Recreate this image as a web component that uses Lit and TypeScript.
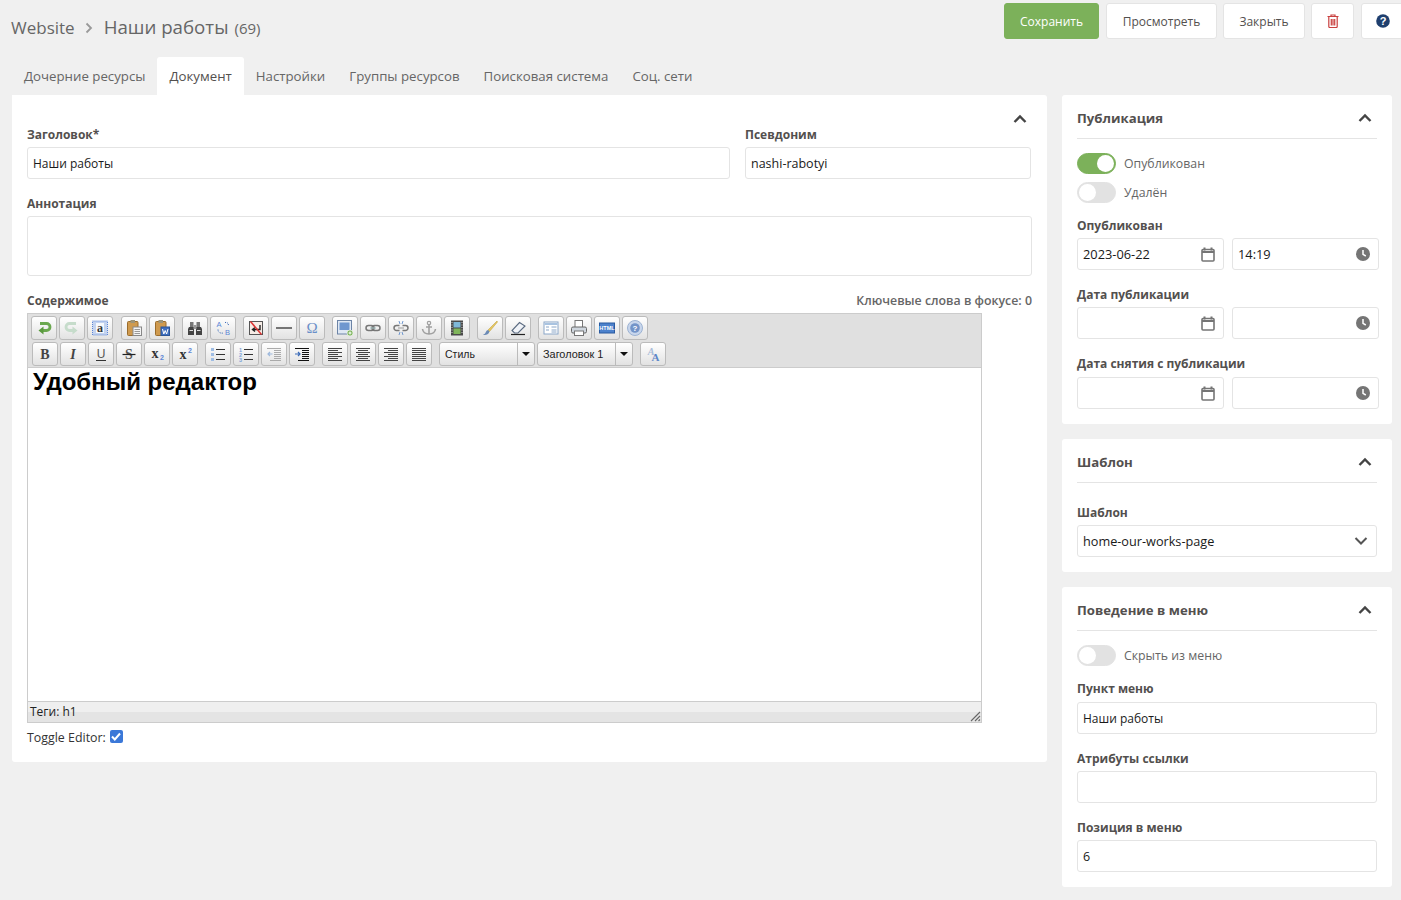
import { LitElement, html, css, svg, nothing } from "lit";
import { customElement } from "lit/decorators.js";

const chevronUp = html`<svg class="chev" width="14" height="10" viewBox="0 0 14 10"><path d="M1.5 8 7 2.5 12.5 8" fill="none" stroke="#444" stroke-width="2.4"/></svg>`;
const chevronDown = html`<svg width="14" height="10" viewBox="0 0 14 10"><path d="M1.5 2 7 7.5 12.5 2" fill="none" stroke="#555" stroke-width="2"/></svg>`;
const calendar = html`<svg width="14" height="15" viewBox="0 0 14 15"><path d="M3.5.5v3M10.500.5v3" stroke="#757575" stroke-width="2"/><rect x="1" y="2.500" width="12" height="11.500" rx="1" fill="none" stroke="#757575" stroke-width="1.600"/><path d="M1 5h12" stroke="#757575" stroke-width="2"/></svg>`;
const clock = html`<svg width="14" height="14" viewBox="0 0 14 14"><circle cx="7" cy="7" r="7" fill="#757575"/><path d="M7 3v4.300l2.800 1.700" fill="none" stroke="#fff" stroke-width="1.500"/></svg>`;

// toolbar icons, 16x16 box
const icons: Record<string, unknown> = {
  undo: svg`<path d="M4 3.500h6.500a3.500 3.500 0 0 1 0 7H6.500" fill="none" stroke="#6aa84f" stroke-width="2.800"/><path d="M7.500 6.500 2.500 10.500l5 4z" fill="#5a9a3f"/>`,
  redo: svg`<path d="M12 3.500H5.500a3.500 3.500 0 0 0 0 7h4" fill="none" stroke="#c6dccb" stroke-width="2.800"/><path d="M8.500 6.500l5 4-5 4z" fill="#c6dccb"/>`,
  selectall: svg`<rect x="0.500" y="1" width="15" height="14" fill="#c3d3f0"/><path d="M.5 1h15v14H.5z" fill="none" stroke="#5c86d6" stroke-dasharray="1 1"/><rect x="4" y="3" width="8" height="10" fill="#fff" opacity=".85"/><text x="8" y="12" font-family="Liberation Serif" font-weight="700" font-size="12" text-anchor="middle" fill="#333">a</text>`,
  paste: svg`<rect x="1.500" y="1.500" width="10.500" height="14" rx="1" fill="#cf9a4e" stroke="#9a6c2c"/><rect x="4.500" y="0" width="4.500" height="3" fill="#9c9478"/><rect x="7" y="7" width="8.500" height="8.500" fill="#f4f4f4" stroke="#888"/><path d="M8.500 9.500h5.500M8.500 11.500h5.500M8.500 13.500h5.500" stroke="#999"/>`,
  word: svg`<rect x="1.500" y="1.500" width="10.500" height="14" rx="1" fill="#cf9a4e" stroke="#9a6c2c"/><rect x="4.500" y="0" width="4.500" height="3" fill="#9c9478"/><rect x="7" y="7" width="8.500" height="8.500" fill="#3f6fc0" stroke="#2c5596"/><path d="M8.500 9l1.300 5 1.400-3.500 1.400 3.500L14 9" fill="none" stroke="#fff"/>`,
  search: svg`<path d="M2 7h5v8H1V9zM9 7h5l1 2v6H9z" fill="#444"/><rect x="3" y="2" width="3.500" height="5" fill="#777"/><rect x="9.500" y="2" width="3.500" height="5" fill="#777"/><rect x="6.500" y="5" width="3" height="4" fill="#999"/><path d="M2.500 10.500h3.500M10 10.500h3.500" stroke="#ddd"/>`,
  replace: svg`<text x="4" y="7" font-family="Liberation Sans" font-size="7.500" text-anchor="middle" fill="#5c86d6">A</text><text x="12.500" y="14.500" font-family="Liberation Sans" font-size="7.500" text-anchor="middle" fill="#5c86d6">B</text><path d="M10 2.500c3-.5 3.500 1.500 3.500 3.500M3 9.500c0 3 2 4 6 3.500" fill="none" stroke="#3a6ab8" stroke-dasharray="1 1"/>`,
  pagebreak: svg`<rect x="1.500" y="1.500" width="13" height="13" fill="#f6ece6" stroke="#555"/><path d="M12 5v4.500H5M7 7.500l-2.500 2 2.500 2" fill="none" stroke="#222" stroke-width="1.400"/><path d="M2.500 1.500l11 13" stroke="#d33" stroke-width="1.500"/>`,
  hr: svg`<path d="M0 8h16" stroke="#222" stroke-width="1.200"/>`,
  omega: svg`<text x="8" y="13" font-family="Liberation Serif" font-size="15" text-anchor="middle" fill="#6a8fc8">Ω</text>`,
  image: svg`<rect x="0.500" y="0.500" width="14" height="13.500" fill="#dfe8f4" stroke="#6c84a6"/><rect x="2.500" y="2.500" width="10" height="7.500" fill="#6f97cf"/><circle cx="13" cy="13" r="3" fill="#7bb35a" stroke="#fff" stroke-width=".6"/><path d="M11.500 13h3M13 11.500v3" stroke="#fff"/>`,
  link: svg`<rect x="1" y="5.500" width="8" height="5" rx="2.500" fill="none" stroke="#777" stroke-width="1.500"/><rect x="7" y="5.500" width="8" height="5" rx="2.500" fill="none" stroke="#777" stroke-width="1.500"/><path d="M5 8h6" stroke="#9bb" />`,
  unlink: svg`<path d="M6.500 5.500H3.500a2.500 2.500 0 0 0 0 5h3M9.500 5.500h3a2.500 2.500 0 0 1 0 5h-3" fill="none" stroke="#777" stroke-width="1.500"/><path d="M5 8h6" stroke="#999"/><path d="M6 1l1 3M10 1 9 4M6 15l1-3M10 15l-1-3" stroke="#6f97cf"/>`,
  anchor: svg`<circle cx="8" cy="3" r="1.700" fill="none" stroke="#a0a0a0" stroke-width="1.200"/><path d="M8 4.500V14M5 7h6M1.500 9c.5 3.500 3.500 5 6.500 5s6-1.500 6.500-5" fill="none" stroke="#a0a0a0" stroke-width="1.600"/>`,
  media: svg`<rect x="2" y="0.500" width="12" height="15" fill="#4a4a4a"/><rect x="4.500" y="2" width="7" height="5.500" fill="#7fb8d8"/><rect x="4.500" y="8.500" width="7" height="5.500" fill="#7fb55a"/><path d="M3 2v12" stroke="#ccc" stroke-dasharray="1 1.500"/><path d="M13 2v12" stroke="#ccc" stroke-dasharray="1 1.500"/>`,
  brush: svg`<path d="M15 1 6 10l1.500 1.500L15.500 2z" fill="#e8c860" stroke="#b89a3a" stroke-width=".5"/><path d="M6 10c-2 .5-2 2-3 3.500-.5.800-1.500 1-2 1.200 2 .8 5.500.3 6.500-3.200z" fill="#6b8ab5"/>`,
  eraser: svg`<path d="M9.500 2.500 15 6 8 13H4.500L2 10.500z" fill="#f0f3f8" stroke="#5a6a80" stroke-width="1.100"/><path d="M1 14.500h14" stroke="#222" stroke-width="1.200"/>`,
  template: svg`<rect x="1" y="2" width="14" height="12" fill="#fff" stroke="#8aa6c8"/><path d="M1.500 4h13" stroke="#a9c3e0" stroke-width="2"/><path d="M3 7h3M3 10h3M8.500 7h5M8.500 10h5M8.500 12h5" stroke="#8aa6c8"/>`,
  print: svg`<rect x="4" y="0.500" width="7.500" height="7" fill="#fff" stroke="#777"/><rect x="0.500" y="7" width="15" height="6" rx="1.500" fill="#cfd6de" stroke="#666"/><rect x="3.500" y="11" width="9" height="4.500" fill="#fff" stroke="#777"/>`,
  html: svg`<rect x="0.500" y="3" width="15" height="10" fill="#4d82cc" stroke="#2a5aa0"/><text x="8" y="10.300" font-family="Liberation Sans" font-weight="700" font-size="5.500" text-anchor="middle" fill="#fff">HTML</text>`,
  help: svg`<circle cx="8" cy="8" r="7.500" fill="#c8d6ec" stroke="#9cb2d2"/><circle cx="8" cy="8" r="4.800" fill="#7394c8"/><text x="8" y="11" font-family="Liberation Sans" font-weight="700" font-size="8" text-anchor="middle" fill="#fff">?</text>`,
  bold: svg`<text x="8" y="13" font-family="Liberation Serif" font-weight="700" font-size="14" text-anchor="middle" fill="#444">B</text>`,
  italic: svg`<text x="8" y="13" font-family="Liberation Serif" font-style="italic" font-weight="700" font-size="14" text-anchor="middle" fill="#444">I</text>`,
  underline: svg`<text x="8" y="12" font-family="Liberation Sans" font-size="12" text-anchor="middle" fill="#555">U</text><path d="M3 14.500h10" stroke="#333"/>`,
  strike: svg`<text x="8" y="13" font-family="Liberation Serif" font-weight="700" font-size="14" text-anchor="middle" fill="#555">S</text><path d="M1.500 8.500h13" stroke="#222" stroke-width="1.200"/>`,
  sub: svg`<text x="6" y="12" font-family="Liberation Serif" font-weight="700" font-size="14" text-anchor="middle" fill="#333">x</text><text x="13" y="14" font-family="Liberation Sans" font-weight="700" font-size="7" text-anchor="middle" fill="#5c86d6">2</text>`,
  sup: svg`<text x="6" y="13" font-family="Liberation Serif" font-weight="700" font-size="14" text-anchor="middle" fill="#333">x</text><text x="13" y="7" font-family="Liberation Sans" font-weight="700" font-size="7" text-anchor="middle" fill="#5c86d6">2</text>`,
  ul: svg`<path d="M1 2h3v3H1zM1 7h3v3H1zM1 12h3v3H1z" fill="#9fbde4"/><path d="M6 3.500h9M6 8.500h9M6 13.500h9" stroke="#333" stroke-width="1.100"/>`,
  ol: svg`<text x="2.500" y="6" font-family="Liberation Sans" font-weight="700" font-size="5.500" text-anchor="middle" fill="#7fa5d8">1</text><text x="2.500" y="11" font-family="Liberation Sans" font-weight="700" font-size="5.500" text-anchor="middle" fill="#7fa5d8">2</text><text x="2.500" y="15.500" font-family="Liberation Sans" font-weight="700" font-size="5.500" text-anchor="middle" fill="#7fa5d8">3</text><path d="M6 3.500h9M6 8.500h9M6 13.500h9" stroke="#333" stroke-width="1.100"/>`,
  outdent: svg`<path d="M1 2.500h14M8 4.500h7M8 6.500h7M8 8.500h7M8 10.500h7M8 12.500h7M4 14.500h11" stroke="#aaa"/><path d="M6.500 8H2M4 6 2 8l2 2" fill="none" stroke="#9db8dc" stroke-width="1.200"/>`,
  indent: svg`<path d="M1 2.500h14M8 4.500h7M8 6.500h7M8 8.500h7M8 10.500h7M8 12.500h7M4 14.500h11" stroke="#111"/><path d="M1 8h5M4 6 6 8l-2 2" fill="none" stroke="#3a6ab8" stroke-width="1.200"/>`,
  left: svg`<path d="M1 2.500h14M1 4.500h10M1 6.500h14M1 8.500h10M1 10.500h14M1 12.500h10M1 14.500h14" stroke="#444"/>`,
  center: svg`<path d="M1 2.500h14M3 4.500h10M1 6.500h14M3 8.500h10M1 10.500h14M3 12.500h10M1 14.500h14" stroke="#444"/>`,
  right: svg`<path d="M1 2.500h14M5 4.500h10M1 6.500h14M5 8.500h10M1 10.500h14M5 12.500h10M1 14.500h14" stroke="#444"/>`,
  justify: svg`<path d="M1 2.500h14M1 4.500h14M1 6.500h14M1 8.500h14M1 10.500h14M1 12.500h14M1 14.500h14" stroke="#444"/>`,
  font: svg`<text x="6" y="9" font-family="Liberation Serif" font-weight="700" font-style="italic" font-size="10" text-anchor="middle" fill="#a8bcd8">A</text><text x="10.500" y="15" font-family="Liberation Serif" font-weight="700" font-size="11" text-anchor="middle" fill="#5c86c8">A</text>`,
};

const row1 = [
  ["undo", "redo", "selectall"],
  ["paste", "word"],
  ["search", "replace"],
  ["pagebreak", "hr", "omega"],
  ["image", "link", "unlink", "anchor", "media"],
  ["brush", "eraser"],
  ["template", "print", "html", "help"],
];
const row2 = [
  ["bold", "italic", "underline", "strike", "sub", "sup"],
  ["ul", "ol", "outdent", "indent"],
  ["left", "center", "right", "justify"],
];

@customElement("app-root")
export class AppRoot extends LitElement {
  static styles = css`
    :host {
      display: block;
      height: 900px;
      overflow: hidden;
      background: #f0f0f0;
      color: #53504e;
      font-family: "Open Sans", "Noto Sans", sans-serif;
      font-size: 13px;
    }
    .top {
      display: flex;
      align-items: flex-start;
      padding: 3px 0 0 11px;
      height: 57px;
      box-sizing: border-box;
    }
    .crumbs {
      display: flex;
      align-items: baseline;
      margin-top: 12px;
      font-size: 17px;
      line-height: 24px;
      color: #666;
    }
    .crumbs svg { margin: 0 11px 0 10px; align-self: center; }
    .crumbs .name { font-size: 18.700px; }
    .crumbs .count { font-size: 15px; margin-left: 6px; }
    .actions {
      display: flex;
      gap: 6px;
      margin-left: auto;
      margin-right: -3px;
    }
    .btn {
      height: 36px;
      box-sizing: border-box;
      display: flex;
      align-items: center;
      justify-content: center;
      background: #fff;
      border: 1px solid #e4e4e4;
      border-radius: 3px;
      font-size: 12px;
      color: #53504e;
    }
    .btn.save { width: 95px; background: #7cb15a; border-color: #7cb15a; color: #fff; margin-right: 1px; }
    .btn.view { width: 111px; }
    .btn.close { width: 82px; }
    .btn.icon { width: 43px; }
    .btn.help { margin-left: 1px; }
    .layout {
      display: grid;
      grid-template-columns: 1035px 330px;
      gap: 15px;
      padding-left: 12px;
    }
    .tabs { display: flex; height: 38px; }
    .tab {
      padding: 0 12px;
      line-height: 39px;
      font-size: 13.250px;
      color: #666;
      border-radius: 3px 3px 0 0;
    }
    .tab.active { background: #fff; color: #53504e; }
    .main {
      background: #fff;
      border-radius: 0 3px 3px 3px;
      padding: 15px;
      height: 667px;
      box-sizing: border-box;
    }
    .main-head {
      display: flex;
      justify-content: flex-end;
      height: 17px;
      padding-right: 5px;
      align-items: flex-start;
      padding-top: 4px;
      box-sizing: border-box;
    }
    label, .lbl {
      display: block;
      font-weight: 700;
      font-size: 12px;
      line-height: 16px;
      margin-bottom: 4px;
      color: #53504e;
    }
    .lbl.far { margin-bottom: 5px; }
    .row { display: grid; grid-template-columns: 703px 286px; gap: 15px; margin-bottom: 17px; }
    .input {
      height: 32px;
      box-sizing: border-box;
      border: 1px solid #e4e4e4;
      border-radius: 3px;
      background: #fff;
      padding: 0 5px;
      display: flex;
      align-items: center;
      justify-content: space-between;
      color: #1a1a1a;
      font-size: 12.500px;
    }
    .input.ru { font-size: 12px; }
    .area { height: 60px; margin-bottom: 17px; }
    .content-head { display: flex; justify-content: space-between; }
    .keywords { font-size: 12.350px; line-height: 16px; font-weight: 600; color: #666; }

    .editor {
      width: 955px;
      height: 410px;
      box-sizing: border-box;
      border: 1px solid #ccc;
      display: flex;
      flex-direction: column;
      font-family: "Liberation Sans", Arial, sans-serif;
    }
    .bars {
      background: #e0e0e0;
      height: 54px;
      flex: none;
      padding: 1px 0 0 3px;
      box-sizing: border-box;
      border-bottom: 1px solid #ccc;
    }
    .bar { display: flex; gap: 7px; height: 26px; }
    .bar.second { margin-left: 1px; }
    .group { display: flex; gap: 2px; }
    .bar.first .group:first-child { margin-right: 1px; }
    .tb {
      width: 26px;
      height: 24px;
      margin-top: 1px;
      box-sizing: border-box;
      border: 1px solid #bbb;
      border-radius: 3px;
      background: linear-gradient(#fff, #e2e2e2);
      display: flex;
      align-items: center;
      justify-content: center;
    }
    .sel {
      width: 96px;
      height: 24px;
      margin-top: 1px;
      box-sizing: border-box;
      border: 1px solid #bbb;
      border-radius: 3px;
      background: linear-gradient(#fff, #e2e2e2);
      display: flex;
      font-size: 10.500px;
      color: #222;
      align-items: center;
    }
    .sel + .sel { font-size: 10.900px; }
    .sel span { flex: 1; padding-left: 5px; white-space: nowrap; }
    .sel i {
      width: 16px;
      height: 22px;
      border-left: 1px solid #bbb;
      display: flex;
      align-items: center;
      justify-content: center;
    }
    .sel i::after {
      content: "";
      border: 4px solid transparent;
      border-top: 4px solid #111;
      border-bottom: 0;
    }
    .body {
      flex: 1;
      background: #fff;
      padding: 0 5px;
      color: #000;
    }
    .body h1 { margin: 0; font-size: 24px; line-height: 28px; font-weight: 700; }
    .status {
      height: 21px;
      flex: none;
      box-sizing: border-box;
      border-top: 1px solid #ccc;
      background: linear-gradient(#efefef 50%, #e4e4e4 50%);
      font-family: "Open Sans", sans-serif;
      font-size: 12px;
      line-height: 20px;
      padding-left: 2px;
      color: #222;
      position: relative;
    }
    .status svg { position: absolute; right: 0; bottom: 0; }
    .toggle-ed {
      display: flex;
      align-items: center;
      gap: 4px;
      margin-top: 8px;
      font-size: 12.400px;
      line-height: 14px;
      color: #333;
    }
    .check {
      width: 13px;
      height: 13px;
      background: #3b78d8;
      border-radius: 2px;
      display: flex;
      margin-top: -3px;
      align-items: center;
      justify-content: center;
    }

    .side { padding-top: 38px; display: flex; flex-direction: column; gap: 15px; }
    .card { background: #fff; border-radius: 3px; padding: 0 15px; box-sizing: border-box; }
    .card-head {
      display: flex;
      align-items: center;
      justify-content: space-between;
      height: 44px;
      border-bottom: 1px solid #e4e4e4;
      padding: 3px 5px 0 0;
      box-sizing: border-box;
      font-weight: 700;
      font-size: 13.200px;
      color: #53504e;
    }
    .card.pub { height: 329px; }
    .card.tpl { height: 133px; }
    .card.menu { height: 300px; }
    .switch-row {
      display: flex;
      align-items: center;
      gap: 8px;
      height: 21px;
      font-size: 12.300px;
      color: #666;
      margin-bottom: 8px;
    }
    .switch {
      width: 39px;
      height: 21px;
      border-radius: 11px;
      background: #e2e2e2;
      box-sizing: border-box;
      border: 1px solid #e2e2e2;
      position: relative;
      flex: none;
    }
    .switch::after {
      content: "";
      position: absolute;
      top: 1px;
      left: 1px;
      width: 17px;
      height: 17px;
      border-radius: 50%;
      background: #fff;
    }
    .switch.on { background: #7cb15a; border-color: #7cb15a; }
    .switch.on::after { left: 19px; }
    .switches { padding-top: 14px; }
    .switch-row:last-child { margin-bottom: 15px; }
    .dates { display: grid; grid-template-columns: 147px 147px; gap: 8px; width: 302px; margin-bottom: 17px; }
    .dates .input { padding-right: 8px; font-size: 12.800px; }
    .fld { margin-bottom: 17px; }
    .tpl .fld { margin-top: 22px; }
    .input.select { padding-right: 8px; font-size: 12.700px; }
  `;

  private toolbarButton(name: string) {
    return html`<div class="tb"><svg width="16" height="16" viewBox="0 0 16 16">${icons[name]}</svg></div>`;
  }

  private dateRow(date: string, time: string) {
    return html`<div class="dates">
      <div class="input">${date}<span></span>${calendar}</div>
      <div class="input">${time}<span></span>${clock}</div>
    </div>`;
  }

  private field(label: string, value: string, far = false, ru = false) {
    return html`<div class="fld">
      <div class="lbl ${far ? "far" : ""}">${label}</div>
      <div class="input ${ru ? "ru" : ""}">${value || nothing}</div>
    </div>`;
  }

  render() {
    return html`
      <div class="top">
        <div class="crumbs">
          <span>Website</span>
          <svg width="8" height="12" viewBox="0 0 8 12"><path d="M1.500 1.500 6 6l-4.500 4.500" fill="none" stroke="#999" stroke-width="1.800"/></svg>
          <span class="name">Наши работы</span>
          <span class="count">(69)</span>
        </div>
        <div class="actions">
          <div class="btn save">Сохранить</div>
          <div class="btn view">Просмотреть</div>
          <div class="btn close">Закрыть</div>
          <div class="btn icon">
            <svg width="12" height="14" viewBox="0 0 12 14"><path d="M4 2V1h4v1M.5 2.500h11M1.800 3v9.500a1 1 0 0 0 1 1h6.400a1 1 0 0 0 1-1V3M4.300 5v6.500M6 5v6.500M7.700 5v6.500" fill="none" stroke="#c9403f" stroke-width="1.200"/></svg>
          </div>
          <div class="btn icon help">
            <svg width="14" height="14" viewBox="0 0 14 14"><circle cx="7" cy="7" r="6.800" fill="#1f3f6e"/><text x="7" y="11" font-family="Liberation Sans" font-weight="700" font-size="11" text-anchor="middle" fill="#fff">?</text></svg>
          </div>
        </div>
      </div>
      <div class="layout">
        <div>
          <div class="tabs">
            <div class="tab">Дочерние ресурсы</div>
            <div class="tab active">Документ</div>
            <div class="tab">Настройки</div>
            <div class="tab">Группы ресурсов</div>
            <div class="tab">Поисковая система</div>
            <div class="tab">Соц. сети</div>
          </div>
          <div class="main">
            <div class="main-head">${chevronUp}</div>
            <div class="row">
              <div><label>Заголовок*</label><div class="input ru">Наши работы</div></div>
              <div><label>Псевдоним</label><div class="input">nashi-rabotyi</div></div>
            </div>
            <label>Аннотация</label>
            <div class="input area"></div>
            <div class="content-head">
              <label>Содержимое</label>
              <span class="keywords">Ключевые слова в фокусе: 0</span>
            </div>
            <div class="editor">
              <div class="bars">
                <div class="bar first">
                  ${row1.map((g) => html`<div class="group">${g.map((n) => this.toolbarButton(n))}</div>`)}
                </div>
                <div class="bar second">
                  ${row2.map((g) => html`<div class="group">${g.map((n) => this.toolbarButton(n))}</div>`)}
                  <div class="group">
                    <div class="sel"><span>Стиль</span><i></i></div>
                    <div class="sel"><span>Заголовок 1</span><i></i></div>
                  </div>
                  <div class="group">${this.toolbarButton("font")}</div>
                </div>
              </div>
              <div class="body"><h1>Удобный редактор</h1></div>
              <div class="status">
                Теги: h1
                <svg width="11" height="11" viewBox="0 0 11 11"><path d="M1 10 10 1M5 10l5-5M8.500 10 10 8.500" stroke="#666" stroke-width="1.100"/></svg>
              </div>
            </div>
            <div class="toggle-ed">
              Toggle Editor:
              <span class="check"><svg width="10" height="9" viewBox="0 0 10 9"><path d="M1 4.500 3.800 7.500 9 1.500" fill="none" stroke="#fff" stroke-width="2"/></svg></span>
            </div>
          </div>
        </div>
        <div class="side">
          <section class="card pub">
            <div class="card-head">Публикация ${chevronUp}</div>
            <div class="switches">
              <div class="switch-row"><span class="switch on"></span>Опубликован</div>
              <div class="switch-row"><span class="switch"></span>Удалён</div>
            </div>
            <div class="lbl">Опубликован</div>
            ${this.dateRow("2023-06-22", "14:19")}
            <div class="lbl">Дата публикации</div>
            ${this.dateRow("", "")}
            <div class="lbl far">Дата снятия с публикации</div>
            ${this.dateRow("", "")}
          </section>
          <section class="card tpl">
            <div class="card-head">Шаблон ${chevronUp}</div>
            <div class="fld">
              <div class="lbl">Шаблон</div>
              <div class="input select">home-our-works-page ${chevronDown}</div>
            </div>
          </section>
          <section class="card menu">
            <div class="card-head">Поведение в меню ${chevronUp}</div>
            <div class="switches">
              <div class="switch-row"><span class="switch"></span>Скрыть из меню</div>
            </div>
            ${this.field("Пункт меню", "Наши работы", true, true)}
            ${this.field("Атрибуты ссылки", "")}
            ${this.field("Позиция в меню", "6")}
          </section>
        </div>
      </div>
    `;
  }
}
